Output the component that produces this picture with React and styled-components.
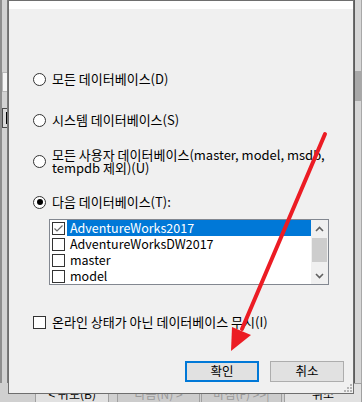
import React from 'react'
import styled, { createGlobalStyle } from 'styled-components'

const GlobalStyle = createGlobalStyle`
  html, body {
    margin: 0;
    padding: 0;
    overflow: hidden;
    background: #d4d4d4;
  }
`

const Screen = styled.div`
  position: relative;
  width: 362px;
  height: 402px;
  overflow: hidden;
  font-family: "Noto Sans CJK KR", "Noto Sans", sans-serif;
  font-size: 12px;
  color: #000;
`

/* the wizard window that sits behind the dialog */
const Wizard = styled.div`
  display: flex;
  flex-direction: column;
  height: 100%;
  background: #d8d8d8;
`

const WizardTop = styled.div`
  flex: 1;
  display: flex;
`

const LeftPane = styled.div`
  width: 5px;
  border-left: 2px solid #8e8e8e;
  border-right: 1px solid #7a7a7a;
  background: #d2d2d2;
  display: flex;
  flex-direction: column;
`

const LeftBox = styled.div`
  margin-top: ${p => p.$top}px;
  height: ${p => p.$h}px;
  border: 1px solid ${p => p.$dark ? '#4a4a4a' : '#b8b8b8'};
  border-right: none;
  background: ${p => p.$dark ? '#d9d9d9' : '#f6f6f6'};
  display: flex;
  align-items: center;
  padding-left: 3px;
`

/* sliver of a glyph from the window underneath */
const Sliver = styled.span`
  width: 2px;
  height: 10px;
  border: 1px solid #000;
  border-right: none;
`

const Middle = styled.div`
  flex: 1;
`

const RightPane = styled.div`
  width: 6px;
  border-left: 1px solid #5c5c5c;
  border-right: 1px solid #a8a8a8;
  background: #d6d6d6;
  display: flex;
  flex-direction: column;
`

const RightThumb = styled.div`
  margin-top: 71px;
  height: 30px;
  background: #a8a8a8;
`

const WizardButtons = styled.div`
  height: 22px;
  display: flex;
  padding-left: 35px;
  margin-bottom: -3px;
  background: #d0d0d0;
  overflow: hidden;
`

const WizardButton = styled.div`
  width: ${p => p.$w}px;
  margin-right: ${p => p.$gap}px;
  box-sizing: border-box;
  border: 1px solid #a0a0a0;
  background: ${p => p.$disabled ? '#cccccc' : '#e1e1e1'};
  color: ${p => p.$disabled ? '#9a9a9a' : '#000'};
  text-align: center;
  line-height: 20px;
  white-space: nowrap;
  overflow: hidden;
`

/* the dialog */
const Dialog = styled.div`
  position: absolute;
  left: 8px;
  top: 0;
  width: 346px;
  height: 394px;
  box-sizing: border-box;
  border: 1px solid #6e6e6e;
  background: #f0f0f0;
  display: flex;
  flex-direction: column;
`

const TitleStrip = styled.div`
  height: 8px;
  background: #fff;
`

const Body = styled.div`
  display: flex;
  flex-direction: column;
  flex: 1;
`

const Option = styled.div`
  display: flex;
  align-items: center;
  gap: 6px;
  margin-left: 24px;
  margin-top: ${p => p.$gap}px;
  min-height: 16px;
`

const Radio = styled.span`
  width: 13px;
  height: 13px;
  flex-shrink: 0;
  box-sizing: border-box;
  border: 1px solid #333;
  border-radius: 50%;
  background: #fff;
  display: flex;
  align-items: center;
  justify-content: center;
  &::after {
    content: '';
    width: 6px;
    height: 6px;
    border-radius: 50%;
    background: #000;
    display: ${p => p.$checked ? 'block' : 'none'};
  }
`

const Label = styled.span`
  font-size: 13px;
  line-height: ${p => p.$lh || 16}px;
  white-space: nowrap;
`

const Check = styled.span`
  width: 13px;
  height: 13px;
  flex-shrink: 0;
  box-sizing: border-box;
  border: 1px solid #333;
  background: #fff;
  display: flex;
  align-items: center;
  justify-content: center;
`

const ListBox = styled.div`
  margin-left: 40px;
  margin-top: 9px;
  width: 280px;
  height: 66px;
  box-sizing: border-box;
  border: 1px solid #828790;
  background: #fff;
  display: flex;
`

const Rows = styled.div`
  flex: 1;
  display: flex;
  flex-direction: column;
`

const Row = styled.div`
  height: 16px;
  display: flex;
  align-items: center;
  padding-left: 2px;
  gap: 2px;
`

const RowText = styled.span`
  flex: 1;
  height: 16px;
  line-height: 16px;
  padding-left: 3px;
  font-size: 12.5px;
  background: ${p => p.$selected ? '#0078d7' : 'transparent'};
  color: ${p => p.$selected ? '#fff' : '#000'};
  white-space: nowrap;
`

const ScrollBar = styled.div`
  width: 17px;
  background: #f0f0f0;
  display: flex;
  flex-direction: column;
`

const ScrollArrow = styled.div`
  height: 17px;
  display: flex;
  align-items: center;
  justify-content: center;
`

const Track = styled.div`
  flex: 1;
  padding: 1px 1px 0;
`

const Thumb = styled.div`
  height: 24px;
  background: #cdcdcd;
`

const ButtonRow = styled.div`
  display: flex;
  justify-content: flex-end;
  gap: 11px;
  padding-right: 9px;
  margin-top: ${p => p.$gap}px;
`

const Button = styled.div`
  width: 74px;
  height: 21px;
  box-sizing: border-box;
  border: ${p => p.$default ? '2px solid #0078d7' : '1px solid #adadad'};
  background: #e1e1e1;
  display: flex;
  align-items: center;
  justify-content: center;
  font-size: 12.5px;
  line-height: 1;
`

const Grip = styled.svg`
  position: absolute;
  right: 1px;
  bottom: 1px;
`

const Overlay = styled.svg`
  position: absolute;
  left: 0;
  top: 0;
  pointer-events: none;
`

function Chevron({ up }) {
  return (
    <svg width="9" height="6" viewBox="0 0 9 6">
      <path
        d={up ? 'M1 5 L4.5 1.5 L8 5' : 'M1 1 L4.5 4.5 L8 1'}
        fill="none"
        stroke="#606060"
        strokeWidth="1.6"
      />
    </svg>
  )
}

function CheckMark() {
  return (
    <svg width="11" height="11" viewBox="0 0 11 11">
      <path d="M1.5 5.5 L4 8 L9.5 2.5" fill="none" stroke="#6a6a6a" strokeWidth="1.2" />
    </svg>
  )
}

const databases = [
  { name: 'AdventureWorks2017', checked: true, selected: true },
  { name: 'AdventureWorksDW2017' },
  { name: 'master' },
  { name: 'model' },
]

export default function App() {
  return (
    <Screen>
      <GlobalStyle />
      <Wizard>
        <WizardTop>
          <LeftPane>
            <LeftBox $top={72} $h={18} />
            <LeftBox $top={16} $h={18} $dark><Sliver /></LeftBox>
          </LeftPane>
          <Middle />
          <RightPane>
            <RightThumb />
          </RightPane>
        </WizardTop>
        <WizardButtons>
          <WizardButton $w={86} $gap={8}>&lt; 뒤로(B)</WizardButton>
          <WizardButton $w={95} $gap={1} $disabled>다음(N) &gt;</WizardButton>
          <WizardButton $w={94} $gap={2} $disabled>마침(F) &gt;&gt;|</WizardButton>
          <WizardButton $w={90} $gap={0}>취소</WizardButton>
        </WizardButtons>
      </Wizard>

      <Dialog>
        <TitleStrip />
        <Body>
          <Option $gap={62}>
            <Radio />
            <Label>모든 데이터베이스(D)</Label>
          </Option>
          <Option $gap={25}>
            <Radio />
            <Label>시스템 데이터베이스(S)</Label>
          </Option>
          <Option $gap={20}>
            <Radio />
            <Label $lh={13}>
              모든 사용자 데이터베이스(master, model, msdb,
              <br />
              tempdb 제외)(U)
            </Label>
          </Option>
          <Option $gap={20}>
            <Radio $checked />
            <Label>다음 데이터베이스(T):</Label>
          </Option>
          <ListBox>
            <Rows>
              {databases.map(db => (
                <Row key={db.name}>
                  <Check>{db.checked && <CheckMark />}</Check>
                  <RowText $selected={db.selected}>{db.name}</RowText>
                </Row>
              ))}
            </Rows>
            <ScrollBar>
              <ScrollArrow><Chevron up /></ScrollArrow>
              <Track><Thumb /></Track>
              <ScrollArrow><Chevron /></ScrollArrow>
            </ScrollBar>
          </ListBox>
          <Option $gap={29}>
            <Check />
            <Label>온라인 상태가 아닌 데이터베이스 무시(I)</Label>
          </Option>
          <ButtonRow $gap={31}>
            <Button $default>확인</Button>
            <Button>취소</Button>
          </ButtonRow>
        </Body>
        <Grip width="10" height="10" viewBox="0 0 10 10">
          {[[8, 0], [8, 3], [5, 3], [8, 6], [5, 6], [2, 6]].map(([x, y]) => (
            <rect key={`${x}-${y}`} x={x} y={y + 2} width="2" height="2" fill="#b4b4b4" />
          ))}
        </Grip>
      </Dialog>

      <Overlay width="362" height="402" viewBox="0 0 362 402">
        <line x1="325" y1="134" x2="242" y2="329" stroke="#ec1c24" strokeWidth="4" strokeLinecap="round" />
        <polygon points="231,351 232,327 251,335" fill="#ec1c24" />
      </Overlay>
    </Screen>
  )
}
